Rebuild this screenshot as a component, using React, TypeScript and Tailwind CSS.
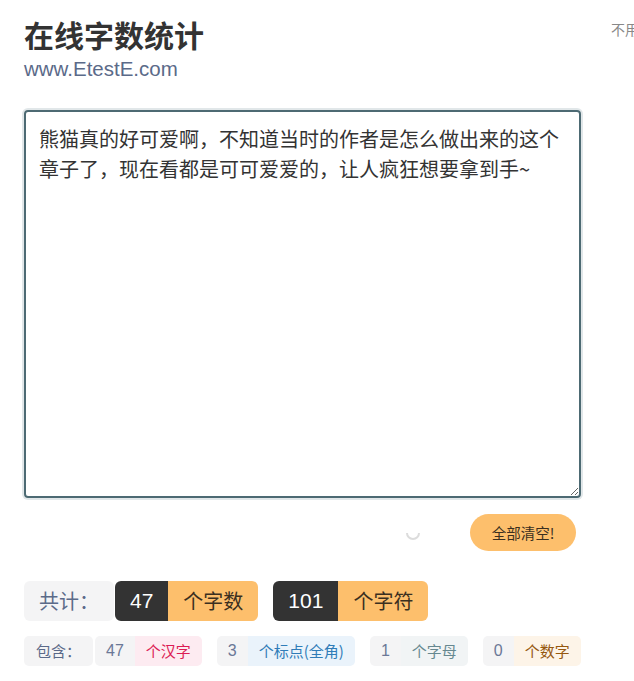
import React from "react";

const CJK = "font-['Microsoft_YaHei','Noto_Sans_CJK_SC',sans-serif]";

const TEXT =
  "熊猫真的好可爱啊，不知道当时的作者是怎么做出来的这个章子了，现在看都是可可爱爱的，让人疯狂想要拿到手~";

const DETAILS = [
  { value: "47", label: "个汉字", tone: "bg-[#fdebf1] text-[#dc1c55]" },
  { value: "3", label: "个标点(全角)", tone: "bg-[#eaf3fb] text-[#2f7cb8]" },
  { value: "1", label: "个字母", tone: "bg-[#f1f4f5] text-[#668890]" },
  { value: "0", label: "个数字", tone: "bg-[#fdf4e8] text-[#96580f]" },
];

function Total({ value, label }: { value: string; label: string }) {
  return (
    <div className="flex h-[40px] overflow-hidden rounded-[6px]">
      <span className="flex items-center bg-[#333333] px-[15px] font-['Liberation_Sans',sans-serif] text-[21px] text-white">
        {value}
      </span>
      <span className="flex items-center bg-[#fdbf6c] px-[15px] text-[20px] text-[#3b2f1f]">
        {label}
      </span>
    </div>
  );
}

export default function App() {
  return (
    <div className={`${CJK} flex h-[681px] w-[634px] overflow-hidden bg-white`}>
      <main className="ml-[24px] flex w-[557px] shrink-0 flex-col">
        <h1 className="mt-[16px] text-[30px] leading-[36px] font-bold text-[#333333]">
          在线字数统计
        </h1>
        <p className="mt-[5px] font-['Liberation_Sans',sans-serif] text-[20.5px] leading-[24px] text-[#5b6a89]">
          www.EtestE.com
        </p>

        <textarea
          defaultValue={TEXT}
          className="mt-[29px] h-[388px] w-full resize-y rounded-[4px] border-2 border-[#4d6a73] px-[13px] py-[12px] text-[20px] leading-[30px] text-[#333333] shadow-[0_0_0_2px_#e1e7e9] outline-none"
        />

        <div className="mt-[16px] flex items-center justify-end gap-[49px] pr-[5px]">
          <svg width="16" height="16" viewBox="0 0 16 16" className="mt-[1px]">
            <path
              d="M2 8 A6 6 0 0 0 14 8"
              fill="none"
              stroke="#dcdcdc"
              strokeWidth="2"
            />
          </svg>
          <button className="h-[37px] w-[106px] rounded-full bg-[#fdbf6c] text-[14.5px] text-[#3b2f1f]">
            全部清空!
          </button>
        </div>

        <div className="mt-[30px] flex items-center">
          <span className="mr-[1px] flex h-[40px] items-center rounded-[6px] bg-[#f4f4f5] px-[15px] text-[20px] text-[#5b6a89]">
            共计：
          </span>
          <div className="flex gap-[15px]">
            <Total value="47" label="个字数" />
            <Total value="101" label="个字符" />
          </div>
        </div>

        <div className="mt-[15px] flex items-center gap-[15px] text-[15px]">
          <div className="flex">
            <span className="mr-[2px] flex h-[30px] items-center rounded-[5px] bg-[#f4f4f5] px-[12px] text-[#5b6a89]">
              包含：
            </span>
            <div className="flex h-[30px] overflow-hidden rounded-[5px]">
              <span className="flex items-center bg-[#f4f4f5] px-[11px] font-['Liberation_Sans',sans-serif] text-[16px] text-[#6b7897]">
                {DETAILS[0].value}
              </span>
              <span className={`flex items-center px-[11px] ${DETAILS[0].tone}`}>
                {DETAILS[0].label}
              </span>
            </div>
          </div>
          {DETAILS.slice(1).map((d) => (
            <div key={d.label} className="flex h-[30px] overflow-hidden rounded-[5px]">
              <span className="flex items-center bg-[#f4f4f5] px-[11px] font-['Liberation_Sans',sans-serif] text-[16px] text-[#6b7897]">
                {d.value}
              </span>
              <span className={`flex items-center px-[11px] ${d.tone}`}>{d.label}</span>
            </div>
          ))}
        </div>
      </main>

      <aside className="ml-[30px] shrink-0 pt-[20px] text-[14px] leading-[18px] whitespace-nowrap text-[#888888]">
        不用注册，即时统计
      </aside>
    </div>
  );
}
